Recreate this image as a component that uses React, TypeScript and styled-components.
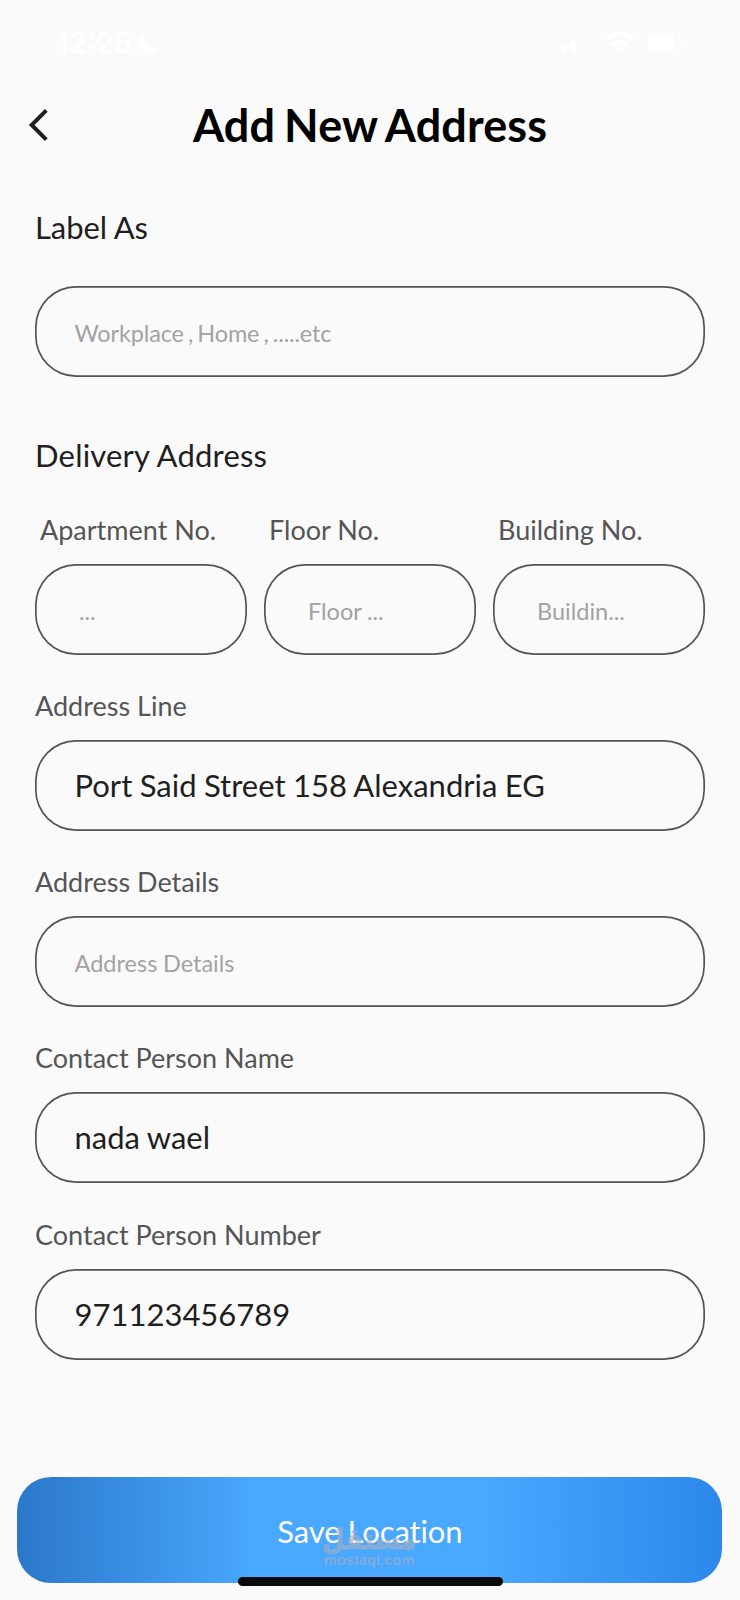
import React from "react";
import styled, { createGlobalStyle } from "styled-components";

const GlobalStyle = createGlobalStyle`
  *, *::before, *::after { box-sizing: border-box; }
  body { margin: 0; background: #fafafa; }
  input, button { font: inherit; }
`;

const Screen = styled.main`
  position: relative;
  width: 740px;
  height: 1600px;
  overflow: hidden;
  display: flex;
  flex-direction: column;
  background: #fafafa;
  font-family: Lato, "Liberation Sans", sans-serif;
  color: #1f1f21;
`;

const StatusBar = styled.div`
  display: flex;
  align-items: center;
  justify-content: space-between;
  height: 84px;
  padding: 1px 54px 0 57px;
  color: #fff;
`;

const StatusGroup = styled.div<{ $gap: number }>`
  display: flex;
  align-items: center;
  gap: ${(p) => p.$gap}px;
`;

const Clock = styled.span`
  font: 600 28.5px/34px Inter, sans-serif;
`;

const Header = styled.header`
  display: grid;
  grid-template-columns: 60px 1fr 60px;
  align-items: center;
  height: 80px;
  padding-top: 2px;
`;

const BackButton = styled.button`
  display: flex;
  padding: 0 0 0 28px;
  border: 0;
  background: none;
  color: #1f1f21;
`;

const Title = styled.h1`
  margin: 0;
  text-align: center;
  font-size: 45px;
  line-height: 54px;
  font-weight: 700;
  letter-spacing: 0.1px;
  word-spacing: -2px;
  color: #000;
`;

const Form = styled.form`
  display: flex;
  flex-direction: column;
  padding: 44px 35px 0;
`;

const SectionTitle = styled.h2<{ $tracking: number }>`
  margin: 0 0 40px;
  font-size: 31px;
  line-height: 38px;
  font-weight: 400;
  letter-spacing: ${(p) => p.$tracking}px;
`;

const Section = styled.section`
  display: flex;
  flex-direction: column;
  & + & { margin-top: 59px; }
`;

const FieldStack = styled.div`
  display: flex;
  flex-direction: column;
  gap: 35.15px;
`;

const Columns = styled.div`
  display: grid;
  grid-template-columns: repeat(3, 1fr);
  gap: 17px;
`;

const FieldWrap = styled.label`
  display: flex;
  flex-direction: column;
  min-width: 0;
`;

const FieldLabel = styled.span<{ $indent?: boolean }>`
  height: 50px;
  padding-left: ${(p) => (p.$indent ? 5 : 0)}px;
  font-size: 27px;
  line-height: 32px;
  color: #555557;
`;

const Input = styled.input<{ $inset?: boolean; $tight?: boolean }>`
  width: 100%;
  height: 91px;
  padding: 0 ${(p) => (p.$inset ? 44 : 39.5)}px 1px;
  border: 0;
  border-radius: 41px;
  outline: 0;
  background: transparent;
  box-shadow: inset 0 0 0 1.7px #545456;
  font-size: 31px;
  word-spacing: -0.5px;
  color: #1f1f21;
  text-overflow: ellipsis;
  &::placeholder {
    color: #a2a2a3;
    font-size: 23.5px;
    opacity: 1;
    letter-spacing: ${(p) => (p.$tight ? -0.15 : 0)}px;
    word-spacing: ${(p) => (p.$tight ? -1.7 : -0.4)}px;
  }
  &:placeholder-shown { padding-bottom: 3px; }
`;

const SaveButton = styled.button`
  width: 705px;
  height: 106px;
  margin: auto 0 17px 17.4px;
  border: 0;
  border-radius: 34px;
  background: linear-gradient(90deg, #2b78c9 0%, #49a8ff 34%, #49a8ff 66%, #2b88ea 100%);
  color: #fff;
  font-size: 31px;
  line-height: 38px;
  letter-spacing: -0.1px;
  word-spacing: -0.8px;
  padding: 1px 0 0;
`;

const Watermark = styled.div`
  position: absolute;
  left: 319px;
  top: 1518px;
  width: 100px;
  display: flex;
  flex-direction: column;
  align-items: center;
  color: rgba(165, 175, 190, 0.6);
`;

const WatermarkName = styled.span`
  font: 700 28px/34px "DejaVu Sans", sans-serif;
  transform: translateY(5px) scaleX(0.92);
  -webkit-text-stroke: 0.8px currentColor;
`;

const WatermarkDomain = styled.span`
  font: 700 14.7px/16px "Liberation Sans", sans-serif;
`;

const HomeIndicator = styled.div`
  position: absolute;
  left: 238px;
  top: 1577px;
  width: 265px;
  height: 9px;
  border-radius: 5px;
  background: #0a0a0a;
`;

type FieldProps = {
  label?: string;
  placeholder?: string;
  value?: string;
  small?: boolean;
  tight?: boolean;
};

function Field({ label, placeholder, value, small, tight }: FieldProps) {
  return (
    <FieldWrap>
      {label && <FieldLabel $indent={small}>{label}</FieldLabel>}
      <Input $inset={small} $tight={tight} placeholder={placeholder} defaultValue={value} />
    </FieldWrap>
  );
}

export default function App() {
  return (
    <>
      <GlobalStyle />
      <Screen>
        <StatusBar>
          <StatusGroup $gap={5}>
            <Clock>12:25</Clock>
            <svg width="23" height="22" viewBox="0 0 23 22" fill="currentColor">
              <path d="M7.5 0.5A11 11 0 1 0 22.5 15.5A12 12 0 0 1 7.5 0.5Z" />
            </svg>
          </StatusGroup>
          <StatusGroup $gap={12}>
            <svg width="32" height="22" viewBox="0 0 32 22" fill="currentColor">
              <rect x="0" y="14" width="6" height="7" rx="1.5" />
              <rect x="9" y="9" width="6" height="12" rx="1.5" />
              <rect x="18" y="5" width="5" height="16" rx="1.5" opacity=".15" />
              <rect x="27" y="0" width="5" height="21" rx="1.5" opacity=".15" />
            </svg>
            <svg width="29" height="22" viewBox="0 0 29 22" fill="none" stroke="currentColor" strokeWidth="4">
              <path d="M1.5 7.5a18.5 18.5 0 0 1 26 0" />
              <path d="M6.5 13a11.5 11.5 0 0 1 16 0" />
              <path d="M14.5 21l-4-4a5.7 5.7 0 0 1 8 0Z" fill="currentColor" stroke="none" />
            </svg>
            <svg width="40" height="22" viewBox="0 0 40 22" fill="currentColor">
              <rect x=".5" y=".5" width="34" height="21" rx="6" fill="none" stroke="currentColor" opacity=".3" />
              <rect x="2" y="3" width="26" height="16" rx="4" />
              <path d="M37 7.5q3 1 3 3.5t-3 3.5z" opacity=".3" />
            </svg>
          </StatusGroup>
        </StatusBar>

        <Header>
          <BackButton aria-label="Back">
            <svg width="21" height="34" viewBox="0 0 21 34" fill="none" stroke="currentColor" strokeWidth="4">
              <path d="M18.300 2.400L3.700 17L18.300 31.600" />
            </svg>
          </BackButton>
          <Title>Add New Address</Title>
        </Header>

        <Form onSubmit={(e) => e.preventDefault()}>
          <Section>
            <SectionTitle $tracking={-0.1}>Label As</SectionTitle>
            <Field tight placeholder="Workplace , Home , .....etc" />
          </Section>
          <Section>
            <SectionTitle $tracking={0.2}>Delivery Address</SectionTitle>
            <FieldStack>
              <Columns>
                <Field small label="Apartment No." placeholder="..." />
                <Field small label="Floor No." placeholder="Floor ..." />
                <Field small label="Building No." placeholder="Buildin..." />
              </Columns>
              <Field label="Address Line" value="Port Said Street 158 Alexandria EG" />
              <Field label="Address Details" placeholder="Address Details" />
              <Field label="Contact Person Name" value="nada wael" />
              <Field label="Contact Person Number" value="971123456789" />
            </FieldStack>
          </Section>
        </Form>

        <SaveButton type="button">Save Location</SaveButton>
        <Watermark>
          <WatermarkName lang="ar" dir="rtl">مستقل</WatermarkName>
          <WatermarkDomain>mostaql.com</WatermarkDomain>
        </Watermark>
        <HomeIndicator />
      </Screen>
    </>
  );
}
